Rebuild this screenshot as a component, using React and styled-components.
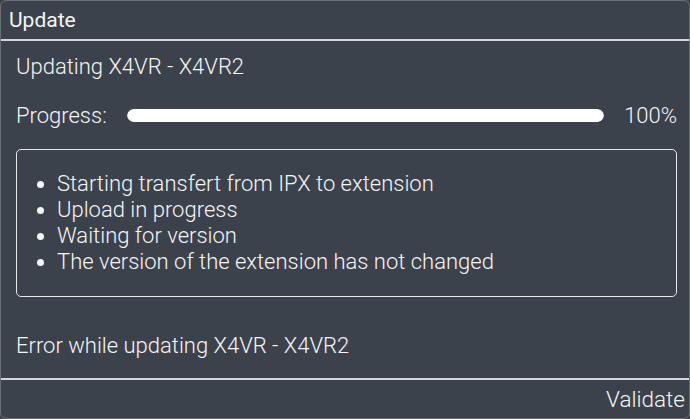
import styled, { createGlobalStyle } from 'styled-components'

const Global = createGlobalStyle`
  html, body {
    margin: 0;
    padding: 0;
    background: #3c424b;
  }
  body {
    font-family: Roboto, "Liberation Sans", sans-serif;
    color: #f4f5f6;
  }
`

const Dialog = styled.div`
  box-sizing: border-box;
  width: 690px;
  height: 419px;
  background: #3c424b;
  border: 1px solid #6a7079;
  border-radius: 6px;
  display: flex;
  flex-direction: column;
  overflow: hidden;
`

const Header = styled.div`
  height: 38px;
  line-height: 38px;
  padding-left: 8px;
  font-size: 21px;
  font-weight: 400;
  border-bottom: 2px solid #d3d6da;
`

const Body = styled.div`
  flex: 1;
  padding: 13px 12px 0 15px;
  display: flex;
  flex-direction: column;
  font-weight: 300;
  font-size: 22px;
`

const Title = styled.div`
  line-height: 26px;
`

const ProgressRow = styled.div`
  margin-top: 22px;
  display: flex;
  align-items: center;
  height: 26px;
`

const Label = styled.span`
  width: 111px;
`

const Track = styled.div`
  flex: 1;
  height: 13px;
  border-radius: 7px;
  background: #4a5059;
  overflow: hidden;
`

const Fill = styled.div`
  height: 100%;
  background: #ffffff;
  border-radius: 7px;
`

const Percent = styled.span`
  width: 73px;
  text-align: right;
`

const LogBox = styled.div`
  margin-top: 21px;
  box-sizing: border-box;
  height: 148px;
  border: 1.5px solid #e6e8ea;
  border-radius: 5px;
  padding: 21px 0 19px;
`

const List = styled.ul`
  margin: 0;
  padding-left: 40px;
  line-height: 26px;
`

const ErrorText = styled.div`
  margin-top: 36px;
  line-height: 26px;
  white-space: nowrap;
`

const Footer = styled.div`
  height: 38px;
  border-top: 2px solid #d3d6da;
  display: flex;
  align-items: center;
  justify-content: flex-end;
  padding-right: 4px;
`

const Validate = styled.button`
  background: none;
  border: 0;
  padding: 0;
  color: #f4f5f6;
  font-family: Roboto, "Liberation Sans", sans-serif;
  font-size: 22.5px;
  font-weight: 300;
  cursor: pointer;
`

const steps = [
  'Starting transfert from IPX to extension',
  'Upload in progress',
  'Waiting for version',
  'The version of the extension has not changed',
]

export default function App() {
  const progress = 100
  return (
    <>
      <Global />
      <Dialog>
        <Header>Update</Header>
        <Body>
          <Title>Updating X4VR - X4VR2</Title>
          <ProgressRow>
            <Label>Progress:</Label>
            <Track>
              <Fill style={{ width: progress + '%' }} />
            </Track>
            <Percent>{progress}%</Percent>
          </ProgressRow>
          <LogBox>
            <List>
              {steps.map((s) => (
                <li key={s}>{s}</li>
              ))}
            </List>
          </LogBox>
          <ErrorText>Error while updating X4VR - X4VR2</ErrorText>
        </Body>
        <Footer>
          <Validate>Validate</Validate>
        </Footer>
      </Dialog>
    </>
  )
}
